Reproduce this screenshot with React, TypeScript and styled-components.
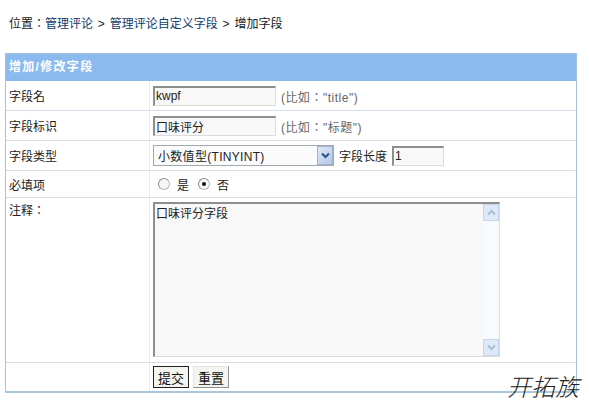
import styled, { createGlobalStyle } from 'styled-components'

const GlobalStyle = createGlobalStyle`
	html, body {
		margin: 0;
		padding: 0;
		background: #fff;
		font-family: "Liberation Sans", "Noto Sans CJK SC", sans-serif;
		font-size: 12px;
		color: #222;
	}
`

const Page = styled.div`
	position: relative;
	width: 589px;
	height: 407px;
	overflow: hidden;
	padding: 15px 5px 0 5px;
	box-sizing: border-box;
`

const Crumbs = styled.div`
	height: 36px;
	padding: 2px 0 0 4px;
	line-height: 15px;
	word-spacing: 1.5px;
	font-family: "Liberation Sans", "Noto Sans CJK TC", sans-serif;
`

const CrumbLink = styled.a`
	color: #123a6b;
	text-decoration: none;
`

const Panel = styled.div`
	width: 572px;
	box-sizing: border-box;
	border: 1px solid #a3c3e0;
	border-bottom: 2px solid #a9c6dd;
`

const PanelTitle = styled.div`
	height: 27px;
	line-height: 26px;
	padding-left: 3px;
	background: #8bbbee;
	color: #fff;
	font-weight: bold;
	letter-spacing: 1.3px;
`

const Row = styled.div<{ $height: number; $last?: boolean }>`
	display: grid;
	grid-template-columns: 144px 1fr;
	height: ${(p) => p.$height}px;
	box-sizing: border-box;
	border-bottom: ${(p) => (p.$last ? 'none' : '1px solid #d5e0eb')};
`

const Label = styled.div<{ $top?: boolean }>`
	display: flex;
	align-items: ${(p) => (p.$top ? 'flex-start' : 'center')};
	padding: ${(p) => (p.$top ? '3px 0 0 3px' : '0 0 0 3px')};
	border-right: 1px solid #e3ebf3;
	font-family: "Liberation Sans", "Noto Sans CJK TC", sans-serif;
`

const Field = styled.div<{ $top?: boolean }>`
	display: flex;
	align-items: ${(p) => (p.$top ? 'flex-start' : 'center')};
	padding: ${(p) => (p.$top ? '4px 0 0 3px' : '0 0 0 3px')};
	gap: 5px;
	position: relative;
`

const TextBox = styled.input<{ $width: number }>`
	width: ${(p) => p.$width}px;
	height: 20px;
	box-sizing: border-box;
	padding: 0 1px;
	background: #f8f8f8;
	border: 1px solid #dcdcdc;
	border-top: 2px solid #8e8e8e;
	border-left: 2px solid #8e8e8e;
	font: 12px "Liberation Sans", "Noto Sans CJK SC", sans-serif;
	color: #222;
	outline: none;
`

const Hint = styled.span`
	color: #666;
	margin-top: 2px;
	letter-spacing: 0.5px;
	font-family: "Liberation Sans", "Noto Sans CJK TC", sans-serif;
`

const SelectBox = styled.div`
	width: 181px;
	height: 21px;
	box-sizing: border-box;
	border: 1px solid #a0a8b0;
	background: #fbfbfb;
	display: flex;
	align-items: center;
	justify-content: space-between;
	padding-left: 4px;
	letter-spacing: 0.3px;
`

const ArrowButton = styled.div`
	width: 16px;
	height: 19px;
	background: linear-gradient(135deg, #dfe8f7, #b4c6e6);
	border: 1px solid #9fb3d0;
	box-sizing: border-box;
	display: flex;
	align-items: center;
	justify-content: center;
`

const RadioGroup = styled.label`
	display: flex;
	align-items: center;
	gap: 7px;
	margin-left: 5px;
	margin-right: -1px;
`

const RadioMark = styled.span<{ $on?: boolean }>`
	width: 12px;
	height: 12px;
	box-sizing: border-box;
	border-radius: 50%;
	border: 1px solid #b5b5b5;
	border-top-color: #8a8a8a;
	border-left-color: #8a8a8a;
	background: #f7f7f7;
	display: flex;
	align-items: center;
	justify-content: center;

	&::after {
		content: '';
		display: ${(p) => (p.$on ? 'block' : 'none')};
		width: 4px;
		height: 4px;
		border-radius: 50%;
		background: #111;
	}
`

const AreaWrap = styled.div`
	position: relative;
	width: 347px;
	height: 155px;
`

const Area = styled.textarea`
	display: block;
	width: 100%;
	height: 100%;
	box-sizing: border-box;
	resize: none;
	padding: 0 1px;
	background: #f8f8f8;
	border: 1px solid #dcdcdc;
	border-top: 2px solid #8e8e8e;
	border-left: 2px solid #8e8e8e;
	font: 12px "Liberation Sans", "Noto Sans CJK SC", sans-serif;
	color: #222;
	outline: none;
	overflow: hidden;
`

const ScrollTrack = styled.div`
	position: absolute;
	top: 2px;
	right: 1px;
	bottom: 1px;
	width: 16px;
	background: #f8fbfe;
	display: flex;
	flex-direction: column;
	justify-content: space-between;
`

const ScrollCap = styled.div`
	height: 17px;
	background: #dde9f8;
	border: 1px solid #c6d6ea;
	box-sizing: border-box;
	display: flex;
	align-items: center;
	justify-content: center;
`

const PushButton = styled.button<{ $main?: boolean }>`
	height: 22px;
	width: 36px;
	box-sizing: border-box;
	padding: 0;
	background: #f4f4f0;
	border: 1px solid ${(p) => (p.$main ? '#222' : '#e4e4e4')};
	border-right-color: ${(p) => (p.$main ? '#222' : '#8f8f8f')};
	border-bottom-color: ${(p) => (p.$main ? '#222' : '#8f8f8f')};
	font: 13px "Liberation Sans", "Noto Sans CJK SC", sans-serif;
	color: #111;
`

const ButtonRow = styled.div`
	display: flex;
	gap: 4px;
`

const Watermark = styled.div`
	position: absolute;
	left: 507px;
	top: 373px;
	font: italic 300 24px "Noto Sans CJK SC", sans-serif;
	line-height: 26px;
	color: #222;
	white-space: nowrap;
`

const Chevron = ({ up, color }: { up?: boolean; color: string }) => (
	<svg width="9" height="7" viewBox="0 0 9 7">
		<path d={up ? 'M1 5.5 4.5 2 8 5.5' : 'M1 1.5 4.5 5 8 1.5'} fill="none" stroke={color} strokeWidth="2" />
	</svg>
)

export default function App() {
	return (
		<Page>
			<GlobalStyle />
			<Crumbs>
				位置：<CrumbLink href="#">管理评论</CrumbLink> &gt; <CrumbLink href="#">管理评论自定义字段</CrumbLink> &gt; 增加字段
			</Crumbs>
			<Panel>
				<PanelTitle>增加/修改字段</PanelTitle>
				<Row $height={30}>
					<Label>字段名</Label>
					<Field>
						<TextBox $width={123} defaultValue="kwpf" />
						<Hint>(比如："title")</Hint>
					</Field>
				</Row>
				<Row $height={30}>
					<Label>字段标识</Label>
					<Field>
						<TextBox $width={123} defaultValue="口味评分" />
						<Hint>(比如："标题")</Hint>
					</Field>
				</Row>
				<Row $height={30}>
					<Label>字段类型</Label>
					<Field>
						<SelectBox>
							小数值型(TINYINT)
							<ArrowButton>
								<Chevron color="#2d4f86" />
							</ArrowButton>
						</SelectBox>
						<span>字段长度</span>
						<TextBox $width={52} defaultValue="1" />
					</Field>
				</Row>
				<Row $height={27}>
					<Label>必填项</Label>
					<Field>
						<RadioGroup>
							<RadioMark />是
						</RadioGroup>
						<RadioGroup>
							<RadioMark $on />否
						</RadioGroup>
					</Field>
				</Row>
				<Row $height={165}>
					<Label $top>注释：</Label>
					<Field $top>
						<AreaWrap>
							<Area defaultValue="口味评分字段" />
							<ScrollTrack>
								<ScrollCap>
									<Chevron up color="#a9bcd8" />
								</ScrollCap>
								<ScrollCap>
									<Chevron color="#a9bcd8" />
								</ScrollCap>
							</ScrollTrack>
						</AreaWrap>
					</Field>
				</Row>
				<Row $height={28} $last>
					<Label />
					<Field>
						<ButtonRow>
							<PushButton $main>提交</PushButton>
							<PushButton>重置</PushButton>
						</ButtonRow>
					</Field>
				</Row>
			</Panel>
			<Watermark>开拓族</Watermark>
		</Page>
	)
}
